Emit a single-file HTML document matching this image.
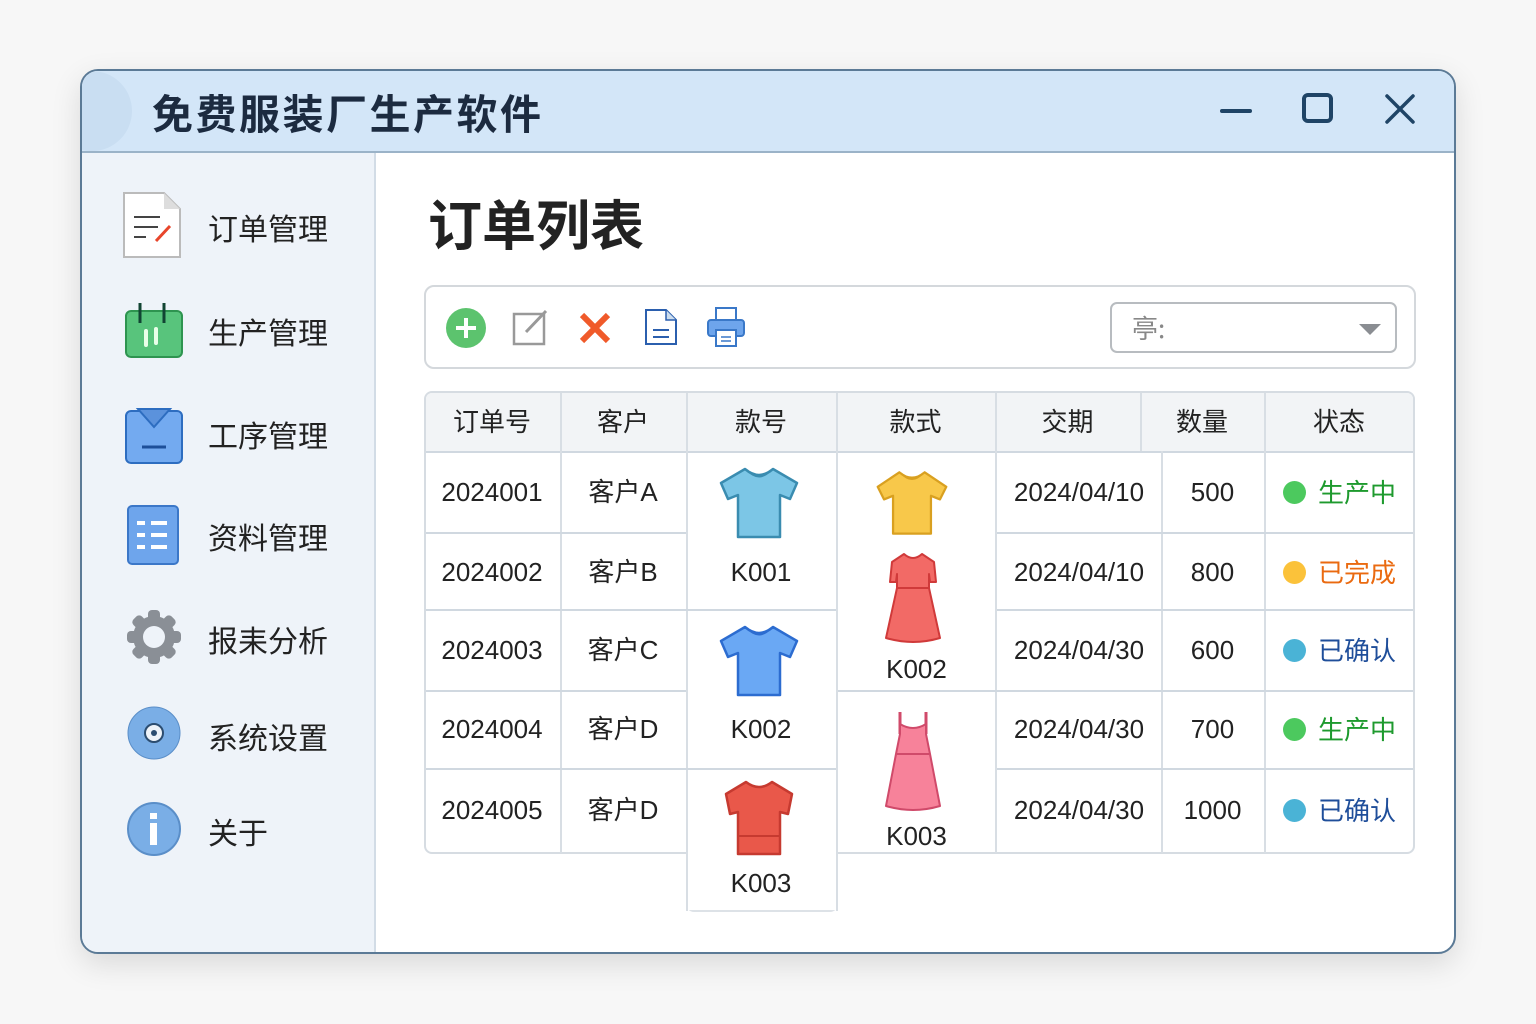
<!DOCTYPE html>
<html><head><meta charset="utf-8"><style>
*{margin:0;padding:0;box-sizing:border-box}
body{width:1536px;height:1024px;background:#f7f7f7;font-family:"Liberation Sans","Noto Sans CJK SC",sans-serif;position:relative;overflow:hidden;color:#222}
.a{position:absolute}
.win{left:80px;top:69px;width:1376px;height:885px;border:2px solid #5b7a96;border-radius:18px;background:#fff;overflow:hidden;box-shadow:0 10px 30px rgba(0,0,0,.12)}
.tb{left:0;top:0;width:100%;height:82px;background:#d3e6f8;border-bottom:2px solid #9bb3c8}
.title{left:70px;top:10px;font-size:41px;font-weight:bold;color:#1c2b40;letter-spacing:2.5px;font-family:"Noto Sans CJK SC",sans-serif}
.side{left:0;top:82px;width:294px;height:805px;background:#eef3f9;border-right:2px solid #d2dce6}
.nav{font-size:30px;color:#222;font-family:"Noto Sans CJK SC",sans-serif}
.h1{left:346px;top:111px;font-size:54px;font-weight:bold;font-family:"Noto Sans CJK SC",sans-serif;color:#222}
.tool{left:342px;top:214px;width:992px;height:84px;border:2px solid #d4d8dc;border-radius:10px}
.sel{left:1028px;top:231px;width:287px;height:51px;border:2px solid #b8bcc0;border-radius:7px}
.t{font-size:26px;color:#222;text-align:center;font-family:"Liberation Sans","Noto Sans CJK SC",sans-serif;line-height:30px}
.hl{background:#d0d8e0;height:2px}
.vl{background:#d8dee4;width:2px}
</style></head><body>
<div class="a win">
 <div class="a tb"></div>
 <div class="a" style="left:-30px;top:0;width:80px;height:80px;border-radius:40px;background:#c9def2"></div>
 <div class="a title">免费服装厂生产软件</div>
 <div class="a" style="left:1138px;top:38px;width:32px;height:4px;background:#1f4466;border-radius:2px"></div>
 <div class="a" style="left:1220px;top:22px;width:31px;height:30px;border:4px solid #1f4466;border-radius:6px"></div>
 <svg class="a" style="left:1302px;top:22px" width="32" height="32"><path d="M3 3L29 29M29 3L3 29" stroke="#1f4466" stroke-width="3.5" stroke-linecap="round"/></svg>
 <div class="a side"></div>
 <svg class="a" style="left:40px;top:120px" width="62" height="70"><path d="M2 2H42L58 18V66H2Z" fill="#fff" stroke="#bbb" stroke-width="2"/><path d="M42 2V18H58" fill="#ddd"/><path d="M12 26H38M12 36H36M12 46H24" stroke="#444" stroke-width="2"/><path d="M34 50L48 35" stroke="#e8452b" stroke-width="3"/></svg>
 <div class="a nav" style="left:126px;top:134px">订单管理</div>
 <svg class="a" style="left:42px;top:230px" width="60" height="58"><rect x="2" y="10" width="56" height="46" rx="5" fill="#58c47c" stroke="#2e9450" stroke-width="2"/><path d="M16 2V22M40 2V22" stroke="#143" stroke-width="3"/><path d="M22 30V44M32 28V42" stroke="#e9ffe9" stroke-width="4" stroke-linecap="round"/></svg>
 <div class="a nav" style="left:126px;top:238px">生产管理</div>
 <svg class="a" style="left:42px;top:334px" width="60" height="60"><rect x="2" y="6" width="56" height="52" rx="5" fill="#73aaf0" stroke="#2d6dc0" stroke-width="2"/><path d="M14 4H46L30 22Z" fill="#5b92dc" stroke="#2d6dc0" stroke-width="2"/><path d="M18 42H42" stroke="#1d4f99" stroke-width="3"/></svg>
 <div class="a nav" style="left:126px;top:341px">工序管理</div>
 <svg class="a" style="left:45px;top:434px" width="52" height="60"><rect x="1" y="1" width="50" height="58" rx="4" fill="#6ea5ec" stroke="#3b77c8" stroke-width="2"/><path d="M10 18H18M24 18H40M10 30H18M24 30H40M10 42H18M24 42H40" stroke="#fff" stroke-width="4"/></svg>
 <div class="a nav" style="left:126px;top:443px">资料管理</div>
 <svg class="a" style="left:44px;top:538px" width="56" height="56" viewBox="-28 -28 56 56"><g fill="#8a8f96"><circle r="21"/><rect x="-6" y="-27" width="12" height="54" rx="4"/><rect x="-6" y="-27" width="12" height="54" rx="4" transform="rotate(45)"/><rect x="-6" y="-27" width="12" height="54" rx="4" transform="rotate(90)"/><rect x="-6" y="-27" width="12" height="54" rx="4" transform="rotate(135)"/></g><circle r="11" fill="#eef3f9"/></svg>
 <div class="a nav" style="left:126px;top:546px">报耒分析</div>
 <svg class="a" style="left:44px;top:634px" width="56" height="56" viewBox="-28 -28 56 56"><circle r="26" fill="#7aaee6" stroke="#5a8ec8" stroke-width="1"/><circle r="9" fill="#eef3f9" stroke="#2c4d70" stroke-width="2"/><circle r="3" fill="#2c4d70"/></svg>
 <div class="a nav" style="left:126px;top:643px">系统设置</div>
 <svg class="a" style="left:44px;top:730px" width="56" height="56"><circle cx="28" cy="28" r="26" fill="#7aaee6" stroke="#5a8ec8" stroke-width="2"/><rect x="24" y="12" width="7" height="6" fill="#fff"/><rect x="24" y="22" width="7" height="22" fill="#fff"/></svg>
 <div class="a nav" style="left:126px;top:738px">关于</div>

 <div class="a h1">订单列表</div>
 <div class="a tool"></div>
 <svg class="a" style="left:363px;top:236px" width="42" height="42"><circle cx="21" cy="21" r="20" fill="#5cc36e"/><path d="M21 11V31M11 21H31" stroke="#fff" stroke-width="4"/></svg>
 <svg class="a" style="left:430px;top:237px" width="38" height="38"><rect x="2" y="6" width="30" height="30" fill="#fff" stroke="#999" stroke-width="2.5"/><path d="M14 24L34 3" stroke="#999" stroke-width="3"/></svg>
 <svg class="a" style="left:496px;top:240px" width="34" height="34"><path d="M4 4L30 30M30 4L4 30" stroke="#f05a2a" stroke-width="6"/></svg>
 <svg class="a" style="left:562px;top:237px" width="34" height="38"><path d="M2 2H22L32 12V36H2Z" fill="#fff" stroke="#2b5fae" stroke-width="2"/><path d="M22 2V12H32" fill="#cde" stroke="#2b5fae" stroke-width="1.5"/><path d="M9 22H25M9 29H25" stroke="#2b5fae" stroke-width="2"/></svg>
 <svg class="a" style="left:624px;top:235px" width="40" height="42"><rect x="10" y="2" width="20" height="14" fill="#fff" stroke="#3a78c8" stroke-width="2"/><rect x="2" y="14" width="36" height="16" rx="3" fill="#6ea5ec" stroke="#3a78c8" stroke-width="2"/><rect x="10" y="24" width="20" height="16" fill="#fff" stroke="#3a78c8" stroke-width="2"/><path d="M15 31H25M15 35H25" stroke="#3a78c8" stroke-width="1.5"/></svg>
 <div class="a sel"></div>
 <div class="a" style="left:1050px;top:238px;font-size:26px;color:#888;font-family:'Noto Sans CJK SC',sans-serif">亭:</div>
 <svg class="a" style="left:1276px;top:252px" width="24" height="14"><path d="M1 1H23L12 12Z" fill="#8a8d92"/></svg>
</div>

<div class="a" style="left:686px;top:440px;width:152px;height:472px;border:2px solid #dde2e7;border-radius:0 0 8px 8px;background:#fff"></div>
<div class="a" style="left:424px;top:391px;width:991px;height:463px;border:2px solid #d6dce2;border-radius:8px;background:#fff"></div>
<div class="a" style="left:426px;top:393px;width:987px;height:58px;background:#f2f4f6;border-radius:6px 6px 0 0"></div>
<div class="a" style="left:688px;top:840px;width:148px;height:70px;background:#fff"></div>
<div class="a hl" style="left:426px;top:451px;width:987px"></div>
<div class="a vl" style="left:560px;top:393px;height:460px"></div>
<div class="a vl" style="left:686px;top:393px;height:518px"></div>
<div class="a vl" style="left:836px;top:393px;height:518px"></div>
<div class="a vl" style="left:995px;top:393px;height:460px"></div>
<div class="a vl" style="left:1140px;top:393px;height:58px"></div>
<div class="a vl" style="left:1161px;top:451px;height:402px"></div>
<div class="a vl" style="left:1264px;top:393px;height:460px"></div>
<div class="a hl" style="left:426px;top:532px;width:260px"></div><div class="a hl" style="left:997px;top:532px;width:416px"></div>
<div class="a hl" style="left:426px;top:609px;width:410px"></div><div class="a hl" style="left:997px;top:609px;width:416px"></div>
<div class="a hl" style="left:426px;top:690px;width:260px"></div><div class="a hl" style="left:838px;top:690px;width:575px"></div>
<div class="a hl" style="left:426px;top:768px;width:410px"></div><div class="a hl" style="left:997px;top:768px;width:416px"></div>

<div class="a t" style="left:424px;top:406px;width:136px;font-family:'Noto Sans CJK SC',sans-serif">订单号</div>
<div class="a t" style="left:560px;top:406px;width:126px;font-family:'Noto Sans CJK SC',sans-serif">客户</div>
<div class="a t" style="left:686px;top:406px;width:150px;font-family:'Noto Sans CJK SC',sans-serif">款号</div>
<div class="a t" style="left:836px;top:406px;width:159px;font-family:'Noto Sans CJK SC',sans-serif">款式</div>
<div class="a t" style="left:995px;top:406px;width:145px;font-family:'Noto Sans CJK SC',sans-serif">交期</div>
<div class="a t" style="left:1140px;top:406px;width:124px;font-family:'Noto Sans CJK SC',sans-serif">数量</div>
<div class="a t" style="left:1264px;top:406px;width:150px;font-family:'Noto Sans CJK SC',sans-serif">状态</div>

<div class="a t" style="left:424px;top:477px;width:136px">2024001</div>
<div class="a t" style="left:424px;top:557px;width:136px">2024002</div>
<div class="a t" style="left:424px;top:635px;width:136px">2024003</div>
<div class="a t" style="left:424px;top:714px;width:136px">2024004</div>
<div class="a t" style="left:424px;top:795px;width:136px">2024005</div>
<div class="a t" style="left:560px;top:477px;width:126px">客户A</div>
<div class="a t" style="left:560px;top:557px;width:126px">客户B</div>
<div class="a t" style="left:560px;top:635px;width:126px">客户C</div>
<div class="a t" style="left:560px;top:714px;width:126px">客户D</div>
<div class="a t" style="left:560px;top:795px;width:126px">客户D</div>
<div class="a t" style="left:997px;top:477px;width:164px">2024/04/10</div>
<div class="a t" style="left:997px;top:557px;width:164px">2024/04/10</div>
<div class="a t" style="left:997px;top:635px;width:164px">2024/04/30</div>
<div class="a t" style="left:997px;top:714px;width:164px">2024/04/30</div>
<div class="a t" style="left:997px;top:795px;width:164px">2024/04/30</div>
<div class="a t" style="left:1161px;top:477px;width:103px">500</div>
<div class="a t" style="left:1161px;top:557px;width:103px">800</div>
<div class="a t" style="left:1161px;top:635px;width:103px">600</div>
<div class="a t" style="left:1161px;top:714px;width:103px">700</div>
<div class="a t" style="left:1161px;top:795px;width:103px">1000</div>
<div class="a" style="left:1283px;top:481px;width:23px;height:23px;border-radius:50%;background:#4cc95e"></div><div class="a t" style="left:1318px;top:477px;font-family:'Noto Sans CJK SC',sans-serif;color:#1e9a2e">生产中</div>
<div class="a" style="left:1283px;top:561px;width:23px;height:23px;border-radius:50%;background:#fbc23a"></div><div class="a t" style="left:1318px;top:557px;font-family:'Noto Sans CJK SC',sans-serif;color:#ea6a10">已完成</div>
<div class="a" style="left:1283px;top:639px;width:23px;height:23px;border-radius:50%;background:#4ab3d6"></div><div class="a t" style="left:1318px;top:635px;font-family:'Noto Sans CJK SC',sans-serif;color:#1f4e9a">已确认</div>
<div class="a" style="left:1283px;top:718px;width:23px;height:23px;border-radius:50%;background:#4cc95e"></div><div class="a t" style="left:1318px;top:714px;font-family:'Noto Sans CJK SC',sans-serif;color:#1e9a2e">生产中</div>
<div class="a" style="left:1283px;top:799px;width:23px;height:23px;border-radius:50%;background:#4ab3d6"></div><div class="a t" style="left:1318px;top:795px;font-family:'Noto Sans CJK SC',sans-serif;color:#1f4e9a">已确认</div>

<div class="a t" style="left:686px;top:557px;width:150px">K001</div>
<div class="a t" style="left:686px;top:714px;width:150px">K002</div>
<div class="a t" style="left:686px;top:868px;width:150px">K003</div>
<div class="a t" style="left:838px;top:654px;width:157px">K002</div>
<div class="a t" style="left:838px;top:821px;width:157px">K003</div>

<svg class="a" style="left:718px;top:467px" width="82" height="72" viewBox="0 0 82 72"><path d="M27 2L3 16L10 32L20 28V70H62V28L72 32L79 16L55 2Q41 14 27 2Z" fill="#7cc6e6" stroke="#3a8cb0" stroke-width="2.5" stroke-linejoin="round"/><path d="M29 3Q41 16 53 3" fill="none" stroke="#3a8cb0" stroke-width="2"/></svg>
<svg class="a" style="left:875px;top:467px" width="74" height="72" viewBox="0 0 82 72"><path d="M27 2L3 18L10 32L20 28V70H62V28L72 32L79 18L55 2Q41 14 27 2Z" fill="#f8c84a" stroke="#d9a020" stroke-width="2.5" stroke-linejoin="round"/><path d="M29 3Q41 16 53 3" fill="none" stroke="#d9a020" stroke-width="2"/></svg>
<svg class="a" style="left:718px;top:625px" width="82" height="72" viewBox="0 0 82 72"><path d="M27 2L3 16L10 32L20 28V70H62V28L72 32L79 16L55 2Q41 14 27 2Z" fill="#6aa8f4" stroke="#2c6cd0" stroke-width="2.5" stroke-linejoin="round"/><path d="M29 3Q41 16 53 3" fill="none" stroke="#2c6cd0" stroke-width="2"/></svg>
<svg class="a" style="left:722px;top:780px" width="74" height="76" viewBox="0 0 74 76"><path d="M24 2L4 14L8 34L16 32V74H58V32L66 34L70 14L50 2Q37 12 24 2Z" fill="#e9584a" stroke="#c63a30" stroke-width="2.5" stroke-linejoin="round"/><path d="M16 56H58" stroke="#c63a30" stroke-width="2"/></svg>
<svg class="a" style="left:884px;top:552px" width="58" height="92" viewBox="0 0 58 92"><path d="M20 2L8 10L6 30L12 30L13 22V36L2 86Q29 94 56 86L45 36V22L46 30L52 30L50 10L38 2Q29 10 20 2Z" fill="#f26a66" stroke="#d03a3a" stroke-width="2" stroke-linejoin="round"/><path d="M13 36H45" stroke="#d03a3a" stroke-width="2"/></svg>
<svg class="a" style="left:884px;top:710px" width="58" height="104" viewBox="0 0 58 104"><path d="M16 2V24M42 2V24" stroke="#d04a6a" stroke-width="3"/><path d="M16 14Q29 22 42 14V24L46 44L56 96Q29 104 2 96L12 44L16 24Z" fill="#f7829a" stroke="#d04a6a" stroke-width="2" stroke-linejoin="round"/><path d="M13 44H45" stroke="#d04a6a" stroke-width="2"/></svg>
</body></html>
